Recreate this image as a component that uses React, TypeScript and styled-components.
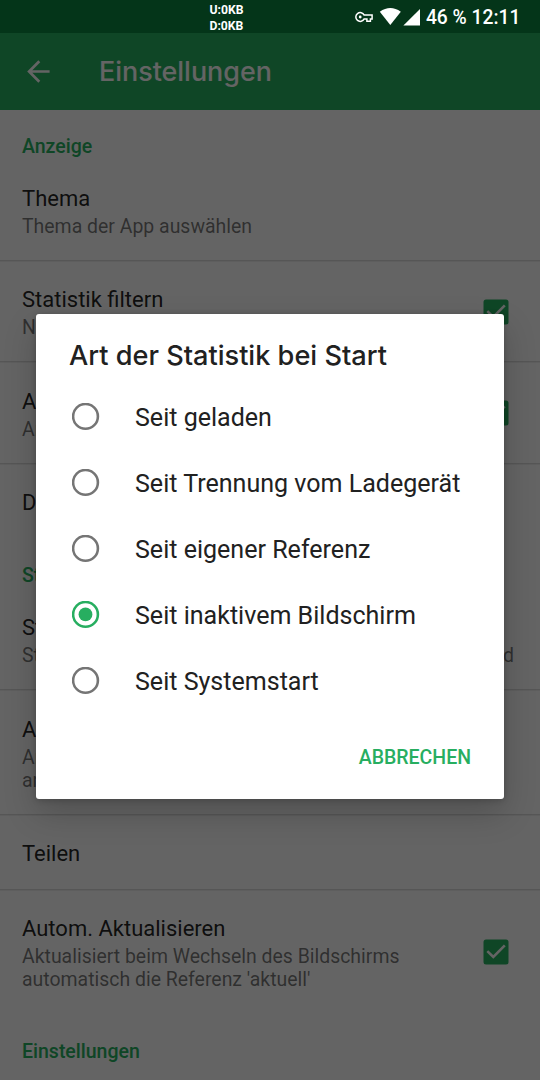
import React from "react";
import styled, { createGlobalStyle } from "styled-components";

const Global = createGlobalStyle`
  * { box-sizing: border-box; }
  html, body { margin: 0; padding: 0; background: #646464; }
  body { font-family: Roboto, "Liberation Sans", sans-serif; overflow: hidden; }
`;

const Screen = styled.div`
  position: relative;
  display: flex;
  flex-direction: column;
  width: 540px;
  height: 1080px;
  overflow: hidden;
  background: #fafafa;
`;

const StatusBar = styled.header`
  position: relative;
  z-index: 3;
  flex: none;
  display: grid;
  grid-template-columns: 209.5px 1fr auto;
  align-items: center;
  height: 33px;
  padding-right: 19.5px;
  background: #043519;
  color: #fff;
`;

const Traffic = styled.div`
  grid-column: 2;
  font-size: 12.2px;
  font-weight: 700;
  line-height: 16px;
  padding-top: 1px;
`;

const StatusIcons = styled.div`
  display: flex;
  align-items: center;
  svg { display: block; }
`;

const Clock = styled.span`
  margin-left: 6px;
  font-size: 19.3px;
  font-weight: 500;
  line-height: 32px;
  padding-top: 2px;
  white-space: nowrap;
`;

const Toolbar = styled.div`
  flex: none;
  display: flex;
  align-items: center;
  gap: 49px;
  height: 77px;
  padding-left: 27px;
  background: #27ae60;
  color: #fafafa;
  svg { display: block; }
`;

const ToolbarTitle = styled.h1`
  margin: 0;
  padding-bottom: 2px;
  font-family: Inter, Roboto, sans-serif;
  font-size: 26.9px;
  font-weight: 500;
`;

const Category = styled.h2`
  flex: none;
  margin: 0;
  height: 50px;
  padding: 24px 22px 0;
  font-size: 19.5px;
  font-weight: 500;
  line-height: 26px;
  color: #27ae60;
`;

const Item = styled.section<{ $height: number; $single: boolean; $last?: boolean }>`
  flex: none;
  display: flex;
  align-items: center;
  justify-content: space-between;
  height: ${(p) => p.$height}px;
  padding: ${(p) => (p.$single ? "1px" : "0")} 31px ${(p) => (p.$last && !p.$single ? "2px" : "0")} 22px;
  border-bottom: ${(p) => (p.$last ? "0" : "1px solid #ebebeb")};
  box-shadow: ${(p) => (p.$last ? "none" : "inset 0 -1px #d6d6d6")};
`;

const ItemTitle = styled.div`
  font-size: 22px;
  line-height: 29px;
  color: rgba(0, 0, 0, 0.87);
  white-space: nowrap;
`;

const Summary = styled.div<{ $wide?: boolean }>`
  width: ${(p) => (p.$wide ? "492px" : "auto")};
  font-size: 19.45px;
  line-height: 23px;
  padding-top: 2px;
  color: rgba(0, 0, 0, 0.54);
  white-space: ${(p) => (p.$wide ? "normal" : "pre")};
  text-align-last: ${(p) => (p.$wide ? "justify" : "auto")};
`;

const Scrim = styled.div`
  position: absolute;
  inset: 0;
  z-index: 1;
  background: rgba(0, 0, 0, 0.6);
`;

const Dialog = styled.div`
  position: absolute;
  z-index: 2;
  left: 36px;
  top: 313.5px;
  width: 468px;
  height: 485.5px;
  display: flex;
  flex-direction: column;
  border-radius: 3px;
  background: #fff;
  box-shadow: 0 14px 33px rgba(0, 0, 0, 0.2), 0 1px 6px rgba(0, 0, 0, 0.2);
`;

const DialogTitle = styled.h3`
  margin: 0;
  padding: 25px 33px 0;
  height: 70px;
  font-family: Inter, Roboto, sans-serif;
  font-size: 27.15px;
  font-weight: 500;
  line-height: 34px;
  color: #212121;
  white-space: nowrap;
`;

const Option = styled.label`
  display: flex;
  align-items: center;
  gap: 36px;
  height: 66px;
  padding-left: 35.5px;
  font-size: 25.05px;
  color: #212121;
  white-space: nowrap;
`;

const OptionText = styled.span`
  padding-top: 2px;
  margin-left: -0.5px;
`;

const Radio = styled.svg`
  display: block;
  flex: none;
  width: 28px;
  height: 28px;
`;

const Actions = styled.div`
  display: flex;
  justify-content: flex-end;
  padding: 32.4px 33px 0;
`;

const TextButton = styled.button`
  border: 0;
  padding: 0;
  background: none;
  font-family: inherit;
  font-size: 19.5px;
  font-weight: 500;
  line-height: 24px;
  color: #27ae60;
`;

const Check = styled.svg`
  display: block;
  width: 26px;
  height: 26px;
  margin-bottom: 1px;
`;

const CheckBox = () => (
  <Check viewBox="0 0 26 26">
    <rect x="0.5" y="0.5" width="25" height="25" rx="2.5" fill="#27ae60" />
    <path d="M4.3 12.1 10.3 17.9 21.8 6.4" fill="none" stroke="#fafafa" strokeWidth="2.6" />
  </Check>
);

const RadioMark = ({ on }: { on: boolean }) => (
  <Radio viewBox="0 0 28 28">
    <circle cx="13.5" cy="13.4" r="12.4" fill="none" stroke={on ? "#27ae60" : "#757575"} strokeWidth="2.6" />
    {on && <circle cx="13.5" cy="13.4" r="6.9" fill="#27ae60" />}
  </Radio>
);

type Entry = {
  title: string;
  summary?: string;
  height: number;
  checked?: boolean;
  wide?: boolean;
  last?: boolean;
};

const display: Entry[] = [
  { title: "Thema", summary: "Thema der App auswählen", height: 102 },
  { title: "Statistik filtern", summary: "Nur relevante", height: 101, checked: true },
  { title: "Anzeige", summary: "Anzeige", height: 102, checked: true },
  { title: "Daten", height: 74, last: true },
];

const statistics: Entry[] = [
  { title: "Start", summary: "Statistik, die beim Start der App angezeigt wird", height: 102, wide: true },
  { title: "Art", summary: "Art der Statistik, die beim Start\nangezeigt wird", height: 125 },
  { title: "Teilen", height: 75 },
  {
    title: "Autom. Aktualisieren",
    summary: "Aktualisiert beim Wechseln des Bildschirms\nautomatisch die Referenz 'aktuell'",
    height: 124,
    checked: true,
    last: true,
  },
];

const options = [
  "Seit geladen",
  "Seit Trennung vom Ladegerät",
  "Seit eigener Referenz",
  "Seit inaktivem Bildschirm",
  "Seit Systemstart",
];

const Preferences = ({ entries }: { entries: Entry[] }) => (
  <>
    {entries.map((e) => (
      <Item key={e.title} $height={e.height} $single={!e.summary} $last={e.last}>
        <div>
          <ItemTitle>{e.title}</ItemTitle>
          {e.summary && <Summary $wide={e.wide}>{e.summary}</Summary>}
        </div>
        {e.checked && <CheckBox />}
      </Item>
    ))}
  </>
);

export default function App() {
  return (
    <>
      <Global />
      <Screen>
        <StatusBar>
          <Traffic>
            <div>U:0KB</div>
            <div>D:0KB</div>
          </Traffic>
          <StatusIcons>
            <svg width="18" height="12" viewBox="0 0 18 12" fill="none" stroke="#fff" strokeWidth="1.5">
              <path d="M9.2 4.1H17.1V7.9H15.4V10.3H11.9V7.9H9.2A4.4 4.4 0 1 1 9.2 4.1Z" />
              <circle cx="5.2" cy="6" r="1.4" fill="#fff" stroke="none" />
            </svg>
            <svg width="47" height="20" viewBox="0 0 47 20" fill="#fff">
              <path d="M6.8 4.7Q17.3-2.8 27.8 4.7L17.3 18Z" />
              <path d="M47 2V18.6H30.4Z" />
            </svg>
            <Clock>46 % 12:11</Clock>
          </StatusIcons>
        </StatusBar>
        <Toolbar>
          <svg width="23" height="23" viewBox="0 0 23 23" fill="none" stroke="#fafafa" strokeWidth="2.7">
            <path d="M22.6 11.5H2.5M12.3 1.3 2.1 11.5 12.3 21.7" />
          </svg>
          <ToolbarTitle>Einstellungen</ToolbarTitle>
        </Toolbar>
        <Category>Anzeige</Category>
        <Preferences entries={display} />
        <Category>Statistik</Category>
        <Preferences entries={statistics} />
        <Category>Einstellungen</Category>
        <Scrim />
        <Dialog role="dialog">
          <DialogTitle>Art der Statistik bei Start</DialogTitle>
          {options.map((o, i) => (
            <Option key={o}>
              <RadioMark on={i === 3} />
              <OptionText>{o}</OptionText>
            </Option>
          ))}
          <Actions>
            <TextButton>ABBRECHEN</TextButton>
          </Actions>
        </Dialog>
      </Screen>
    </>
  );
}
